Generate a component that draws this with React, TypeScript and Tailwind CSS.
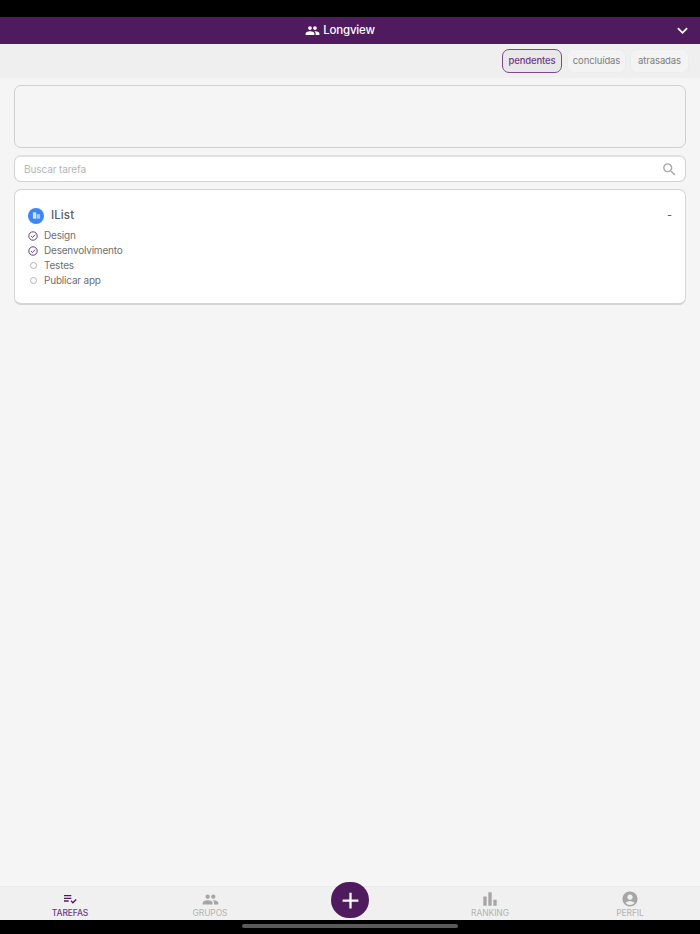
import React from 'react';
import {
  MdAccountCircle,
  MdAdd,
  MdBarChart,
  MdExpandMore,
  MdPeople,
  MdPlaylistAddCheck,
  MdSearch,
} from 'react-icons/md';

const STEPS = [
  { label: 'Design', done: true },
  { label: 'Desenvolvimento', done: true },
  { label: 'Testes', done: false },
  { label: 'Publicar app', done: false },
];

function StepMark({ done }: { done: boolean }) {
  if (!done) {
    return <span className="block w-[5px] h-[5px] mx-[1.5px] box-content rounded-full border border-[#b5b5b5]" />;
  }
  return (
    <svg viewBox="0 0 10 10" className="w-[10px] h-[10px]" fill="none" aria-hidden>
      <circle cx="5" cy="5" r="4.2" stroke="#6b3d82" strokeWidth="1" />
      <path d="M3 5.1 L4.5 6.5 L7.1 3.7" stroke="#6b3d82" strokeWidth="1" />
    </svg>
  );
}

function NavItem({ label, icon, active }: { label: string; icon: React.ReactNode; active?: boolean }) {
  return (
    <div className="flex-1 flex flex-col items-center h-full pt-[4px]">
      <div className="h-[16px] flex items-center justify-center">{icon}</div>
      <span className={`text-[8.5px] leading-[12px] tracking-[-0.1px] ${active ? 'text-[#6e3a86] font-medium' : 'text-[#b3b3b3]'}`}>
        {label}
      </span>
    </div>
  );
}

export default function App() {
  return (
    <div className="relative w-[700px] h-[934px] flex flex-col bg-[#f5f5f5] overflow-hidden font-['Inter',sans-serif]">
      <div className="h-[17px] bg-black" />

      <header className="relative h-[27px] bg-[#4f1b5e] flex items-center justify-center text-white pr-[20px]">
        <MdPeople className="w-[15px] h-[15px] mr-[3px]" />
        <span className="text-[11.5px] font-medium tracking-[-0.2px]">Longview</span>
        <MdExpandMore className="absolute right-[7px] top-[3px] w-[21px] h-[21px]" />
      </header>

      <div className="h-[34px] bg-[#efefef] flex items-center justify-end gap-1 pr-[11px]">
        <button className="h-[24px] w-[60px] mr-[1px] rounded-[7px] border border-[#7a4a90] bg-[#e8e8e8] text-[9.5px] font-medium tracking-[-0.15px] text-[#6e3a86]">
          pendentes
        </button>
        <button className="h-[24px] w-[59px] rounded-[7px] border border-[#ececec] bg-[#f3f3f3] text-[9.5px] tracking-[-0.1px] text-[#7d7d7d]">
          concluídas
        </button>
        <button className="h-[24px] w-[59px] rounded-[7px] border border-[#ececec] bg-[#f3f3f3] text-[9.5px] tracking-[-0.1px] text-[#7d7d7d]">
          atrasadas
        </button>
      </div>

      <main className="flex-1 flex flex-col gap-[7px] px-[14px] pt-[7px]">
        <div className="h-[63px] rounded-[7px] border border-[#cfcfcf] bg-[#f5f5f5]" />

        <div className="h-[27px] rounded-[7px] border border-[#d2d2d2] border-t-2 border-t-[#e2e2e2] bg-white flex items-center justify-between pl-[9px] pr-[7px]">
          <span className="text-[10px] tracking-[-0.1px] text-[#b5b5b5]">Buscar tarefa</span>
          <MdSearch className="w-[17px] h-[17px] text-[#a8a8a8]" />
        </div>

        <section className="h-[116px] rounded-[7px] border border-[#d4d4d4] border-b-2 bg-white pl-[13px] pr-[13px] pt-[17px]">
          <div className="flex items-center h-[17px]">
            <span className="w-4 h-4 rounded-full bg-[#3d86f8] flex items-center justify-center">
              <svg viewBox="0 0 10 10" className="w-[9px] h-[9px]" aria-hidden>
                <path d="M1 1.5h3.6v7H1z" fill="#dbe8fd" />
                <path d="M5.2 3.5H9v5H5.2z" fill="#a9c8fa" />
              </svg>
            </span>
            <span className="ml-[7px] text-[11.5px] font-medium tracking-[0.1px] text-[#5c5c5c]">IList</span>
            <span className="ml-auto text-[11px] text-[#5c5c5c]">-</span>
          </div>
          <ul className="mt-[4px]">
            {STEPS.map((step) => (
              <li key={step.label} className="flex items-center h-[15px]">
                <StepMark done={step.done} />
                <span className="ml-[6px] text-[10px] text-[#6f6f6f] tracking-[-0.2px]">{step.label}</span>
              </li>
            ))}
          </ul>
        </section>
      </main>

      <nav className="h-[34px] bg-[#f0f0f0] border-t border-[#ebebeb] flex">
        <NavItem label="TAREFAS" active icon={<MdPlaylistAddCheck className="w-[16px] h-[16px] text-[#4f1b5e]" />} />
        <NavItem label="GRUPOS" icon={<MdPeople className="w-[17px] h-[17px] text-[#a6a6a6]" />} />
        <div className="flex-1" />
        <NavItem label="RANKING" icon={<MdBarChart className="w-[20px] h-[20px] text-[#a6a6a6]" />} />
        <NavItem label="PERFIL" icon={<MdAccountCircle className="w-[18px] h-[18px] text-[#a6a6a6]" />} />
      </nav>

      <div className="h-[14px] bg-black flex justify-center pt-[4px]">
        <span className="block w-[216px] h-[4px] rounded-full bg-[#5a5a5a]" />
      </div>

      <button className="absolute left-[331px] top-[882px] w-[38px] h-[36px] rounded-full bg-[#4f1b5e] flex items-center justify-center text-white">
        <MdAdd className="w-[27px] h-[27px]" />
      </button>
    </div>
  );
}
